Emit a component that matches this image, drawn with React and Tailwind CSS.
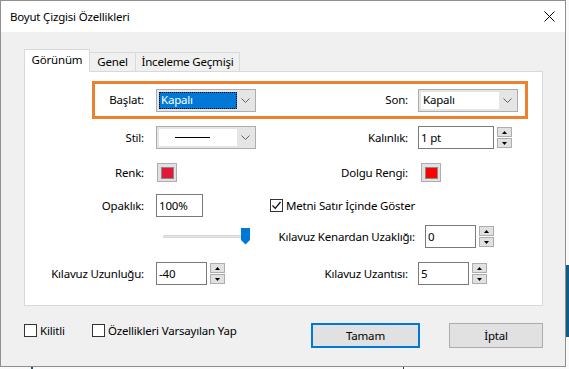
import React from "react";

const Chevron = () => (
  <svg width="9" height="5" viewBox="0 0 9 5">
    <path d="M0.5 0.5 L4.5 4.5 L8.5 0.5" stroke="#606060" fill="none" strokeWidth="1" />
  </svg>
);

const Select = ({ children, highlighted }) => (
  <div className="w-[100px] h-[23px] border border-[#adadad] bg-[#e5e5e5] flex items-stretch p-[2px]">
    <div
      className={
        highlighted
          ? "w-[78px] bg-[#0078d7] text-white flex items-center px-[2px] outline-1 outline-dotted outline-[#000] -outline-offset-1"
          : "w-[78px] bg-white flex items-center px-[2px]"
      }
    >
      {children}
    </div>
    <div className="flex-1 flex items-center justify-center">
      <Chevron />
    </div>
  </div>
);

const Spin = () => (
  <div className="flex flex-col ml-[3px] w-[15px] h-[21px] gap-[1px]">
    <div className="flex-1 border border-[#adadad] bg-[#e1e1e1] flex items-center justify-center">
      <svg width="5" height="3" viewBox="0 0 5 3">
        <path d="M2.5 0 L5 3 L0 3Z" fill="#000" />
      </svg>
    </div>
    <div className="flex-1 border border-[#adadad] bg-[#e1e1e1] flex items-center justify-center">
      <svg width="5" height="3" viewBox="0 0 5 3">
        <path d="M0 0 L5 0 L2.5 3Z" fill="#000" />
      </svg>
    </div>
  </div>
);

const Input = ({ w, value }) => (
  <div
    className="h-[23px] border border-[#7a7a7a] bg-white flex items-center pl-[2px]"
    style={{ width: w }}
  >
    {value}
  </div>
);

const Check = ({ checked }) => (
  <div className="w-[13px] h-[13px] border border-[#333] bg-white flex items-center justify-center shrink-0">
    {checked && (
      <svg width="11" height="11" viewBox="0 0 11 11">
        <path d="M1.5 5.5 L4.2 8.3 L9.5 2" stroke="#000" strokeWidth="1.2" fill="none" />
      </svg>
    )}
  </div>
);

const Swatch = ({ color }) => (
  <div className="w-[20px] h-[19px] border border-[#adadad] bg-[#e1e1e1] flex items-center justify-center">
    <div className="w-[13px] h-[12px] border border-[#8a8a8a]" style={{ background: color }} />
  </div>
);

const LeftLabel = ({ children }) => (
  <div className="w-[119px] flex justify-end whitespace-nowrap">{children}</div>
);
const RightLabel = ({ children }) => (
  <div className="w-[138px] shrink-0 flex justify-end whitespace-nowrap">{children}</div>
);

export default function App() {
  return (
    <div className="w-[569px] h-[369px] bg-[#fafafa] relative overflow-hidden font-['Noto_Sans',sans-serif] text-[11.5px] tracking-[-0.2px] text-black leading-none">
      <div className="w-[566px] h-[367px] border border-[#8f8f8f] bg-[#f0f0f0] flex flex-col">
        {/* Title bar */}
        <div className="h-[31px] bg-white flex items-center justify-between pl-[9px] pr-[10px] shrink-0">
          <span>Boyut Çizgisi Özellikleri</span>
          <svg width="11" height="11" viewBox="0 0 11 11">
            <path d="M0.5 0.5 L10.5 10.5 M10.5 0.5 L0.5 10.5" stroke="#000" strokeWidth="1" />
          </svg>
        </div>

        {/* Body */}
        <div className="flex-1 flex flex-col pt-[17px] pl-[23px]">
          {/* Tabs */}
          <div className="flex items-end h-[23px] relative z-10">
            <div className="w-[66px] h-[23px] bg-white border border-[#d9d9d9] border-b-0 flex items-center justify-center pb-[2px]">
              Görünüm
            </div>
            <div className="w-[46px] h-[19px] border border-[#d9d9d9] border-l-0 border-b-0 flex items-center justify-center mb-[1px]">
              Genel
            </div>
            <div className="w-[104px] h-[19px] border border-[#d9d9d9] border-l-0 border-b-0 flex items-center justify-center mb-[1px]">
              İnceleme Geçmişi
            </div>
          </div>

          {/* Panel */}
          <div className="w-[519px] h-[235px] -mt-[1px] bg-white border border-[#d9d9d9] flex flex-col">
            {/* Orange row */}
            <div className="ml-[67px] mt-[9px] w-[436px] h-[38px] border-[3px] border-[#ee8130] flex items-center">
              <div className="w-[49px] text-right">Başlat:</div>
              <div className="ml-[12px] w-[114px]">
                <Select highlighted>Kapalı</Select>
              </div>
              <RightLabel>Son:</RightLabel>
              <div className="ml-[10px]">
                <Select>Kapalı</Select>
              </div>
            </div>

            {/* Stil row */}
            <div className="mt-[7px] h-[23px] flex items-center">
              <LeftLabel>Stil:</LeftLabel>
              <div className="ml-[12px] w-[114px]">
                <Select>
                  <div className="ml-[14px] w-[35px] h-[1px] bg-black" />
                </Select>
              </div>
              <RightLabel>Kalınlık:</RightLabel>
              <div className="ml-[10px] flex items-center">
                <Input w={76} value="1 pt" />
                <Spin />
              </div>
            </div>

            {/* Renk row */}
            <div className="mt-[13px] h-[21px] flex items-center">
              <LeftLabel>Renk:</LeftLabel>
              <div className="ml-[13px] w-[113px]">
                <Swatch color="#e3173a" />
              </div>
              <RightLabel>Dolgu Rengi:</RightLabel>
              <div className="ml-[13px]">
                <Swatch color="#ff0000" />
              </div>
            </div>

            {/* Opaklık row */}
            <div className="mt-[11px] h-[23px] flex items-center">
              <LeftLabel>Opaklık:</LeftLabel>
              <div className="ml-[12px] w-[114px]">
                <Input w={47} value="100%" />
              </div>
              <div className="flex items-center gap-[3px]">
                <Check checked />
                <span>Metni Satır İçinde Göster</span>
              </div>
            </div>

            {/* Slider row */}
            <div className="mt-[8px] h-[23px] flex items-center">
              <div className="w-[138px] shrink-0" />
              <div className="w-[114px] shrink-0 flex items-center">
                <div className="w-[80px] h-[3px] bg-[#e7e7e7] border-y border-[#d6d6d6]" />
                <svg width="9" height="17" viewBox="0 0 9 17" className="-ml-[2px]">
                  <path d="M0 0 H9 V12 L4.5 16.5 L0 12 Z" fill="#0078d7" />
                </svg>
              </div>
              <RightLabel>Kılavuz Kenardan Uzaklığı:</RightLabel>
              <div className="ml-[10px] flex items-center">
                <Input w={51} value="0" />
                <Spin />
              </div>
            </div>

            {/* Uzunluğu row */}
            <div className="mt-[14px] h-[23px] flex items-center">
              <LeftLabel>Kılavuz Uzunluğu:</LeftLabel>
              <div className="ml-[12px] w-[114px] flex items-center">
                <Input w={51} value="-40" />
                <Spin />
              </div>
              <RightLabel>Kılavuz Uzantısı:</RightLabel>
              <div className="ml-[10px] flex items-center">
                <Input w={51} value="5" />
                <Spin />
              </div>
            </div>
          </div>

          {/* Bottom row */}
          <div className="mt-[17px] flex items-start">
            <div className="w-[68px] flex items-center gap-[3px] mt-[1px]">
              <Check />
              <span>Kilitli</span>
            </div>
            <div className="flex items-center gap-[3px] mt-[1px]">
              <Check />
              <span>Özellikleri Varsayılan Yap</span>
            </div>
            <div className="ml-auto mr-[22px] flex gap-[29px]">
              <div className="w-[109px] h-[25px] border-2 border-[#0078d7] bg-[#e1e1e1] flex items-center justify-center">
                Tamam
              </div>
              <div className="w-[94px] h-[25px] border border-[#adadad] bg-[#e1e1e1] flex items-center justify-center">
                İptal
              </div>
            </div>
          </div>
        </div>
      </div>
      {/* background bits outside the dialog */}
      <div className="absolute left-[566px] top-[265px] w-[3px] h-[72px] bg-[#0f5c85]" />
      <div className="absolute left-[31px] top-[367px] w-[2px] h-[2px] bg-[#0f5c85]" />
      <div className="absolute left-[403px] top-[367px] w-[1px] h-[2px] bg-[#333]" />
    </div>
  );
}
